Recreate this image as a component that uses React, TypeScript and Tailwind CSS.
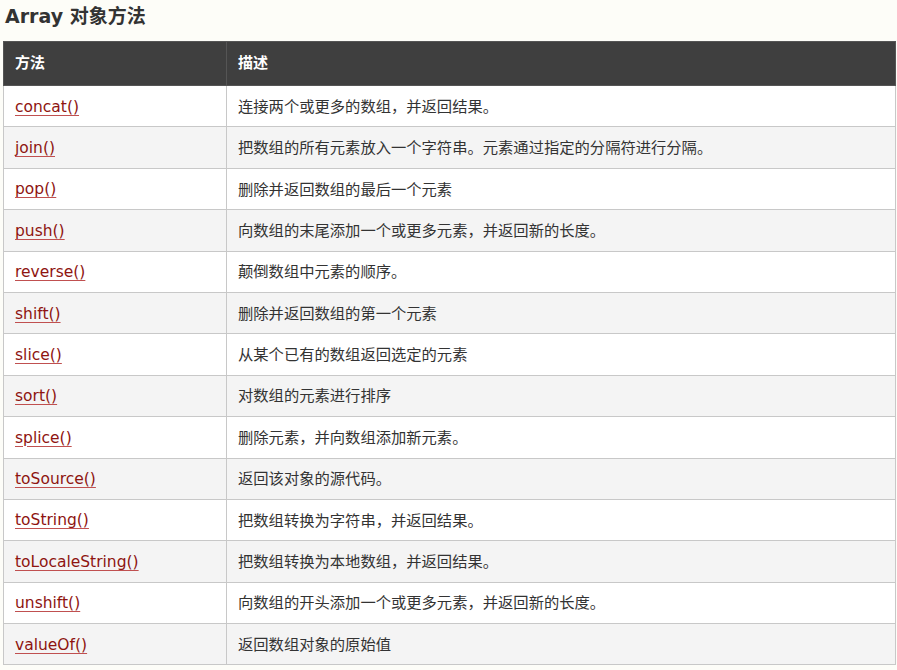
const methods: [string, string][] = [
  ['concat()', '连接两个或更多的数组，并返回结果。'],
  ['join()', '把数组的所有元素放入一个字符串。元素通过指定的分隔符进行分隔。'],
  ['pop()', '删除并返回数组的最后一个元素'],
  ['push()', '向数组的末尾添加一个或更多元素，并返回新的长度。'],
  ['reverse()', '颠倒数组中元素的顺序。'],
  ['shift()', '删除并返回数组的第一个元素'],
  ['slice()', '从某个已有的数组返回选定的元素'],
  ['sort()', '对数组的元素进行排序'],
  ['splice()', '删除元素，并向数组添加新元素。'],
  ['toSource()', '返回该对象的源代码。'],
  ['toString()', '把数组转换为字符串，并返回结果。'],
  ['toLocaleString()', '把数组转换为本地数组，并返回结果。'],
  ['unshift()', '向数组的开头添加一个或更多元素，并返回新的长度。'],
  ['valueOf()', '返回数组对象的原始值'],
]

export default function App() {
  return (
    <div
      className="w-[897px] h-[670px] bg-[#fdfdf8] pl-[3px] pt-[1px] overflow-hidden"
      style={{ fontFamily: '"DejaVu Sans", "Noto Sans CJK SC", sans-serif' }}
    >
      <h2 className="text-[19px] font-bold text-[#333] leading-[30px] pl-[2px] mb-[10px]">Array 对象方法</h2>
      <table className="w-[893px] border-collapse">
        <thead>
          <tr className="bg-[#3f3f3f] text-white h-[44px] text-[15px]">
            <th className="w-[223px] text-left font-bold pl-[11px] border border-[#555]">方法</th>
            <th className="text-left font-bold pl-[11px] border border-[#555]">描述</th>
          </tr>
        </thead>
        <tbody>
          {methods.map(([name, desc], i) => (
            <tr key={name} className={`h-[41.4px] ${i % 2 === 1 ? 'bg-[#f4f4f4]' : 'bg-white'}`}>
              <td className="pl-[11px] pt-[2px] border border-[#c8c8c8] text-[15.5px]">
                <a className="text-[#8e1410] underline decoration-[#c05050] underline-offset-[3px]">{name}</a>
              </td>
              <td className="pl-[11px] pt-[2px] border border-[#c8c8c8] text-[#333] text-[15.3px]">{desc}</td>
            </tr>
          ))}
        </tbody>
      </table>
    </div>
  )
}
